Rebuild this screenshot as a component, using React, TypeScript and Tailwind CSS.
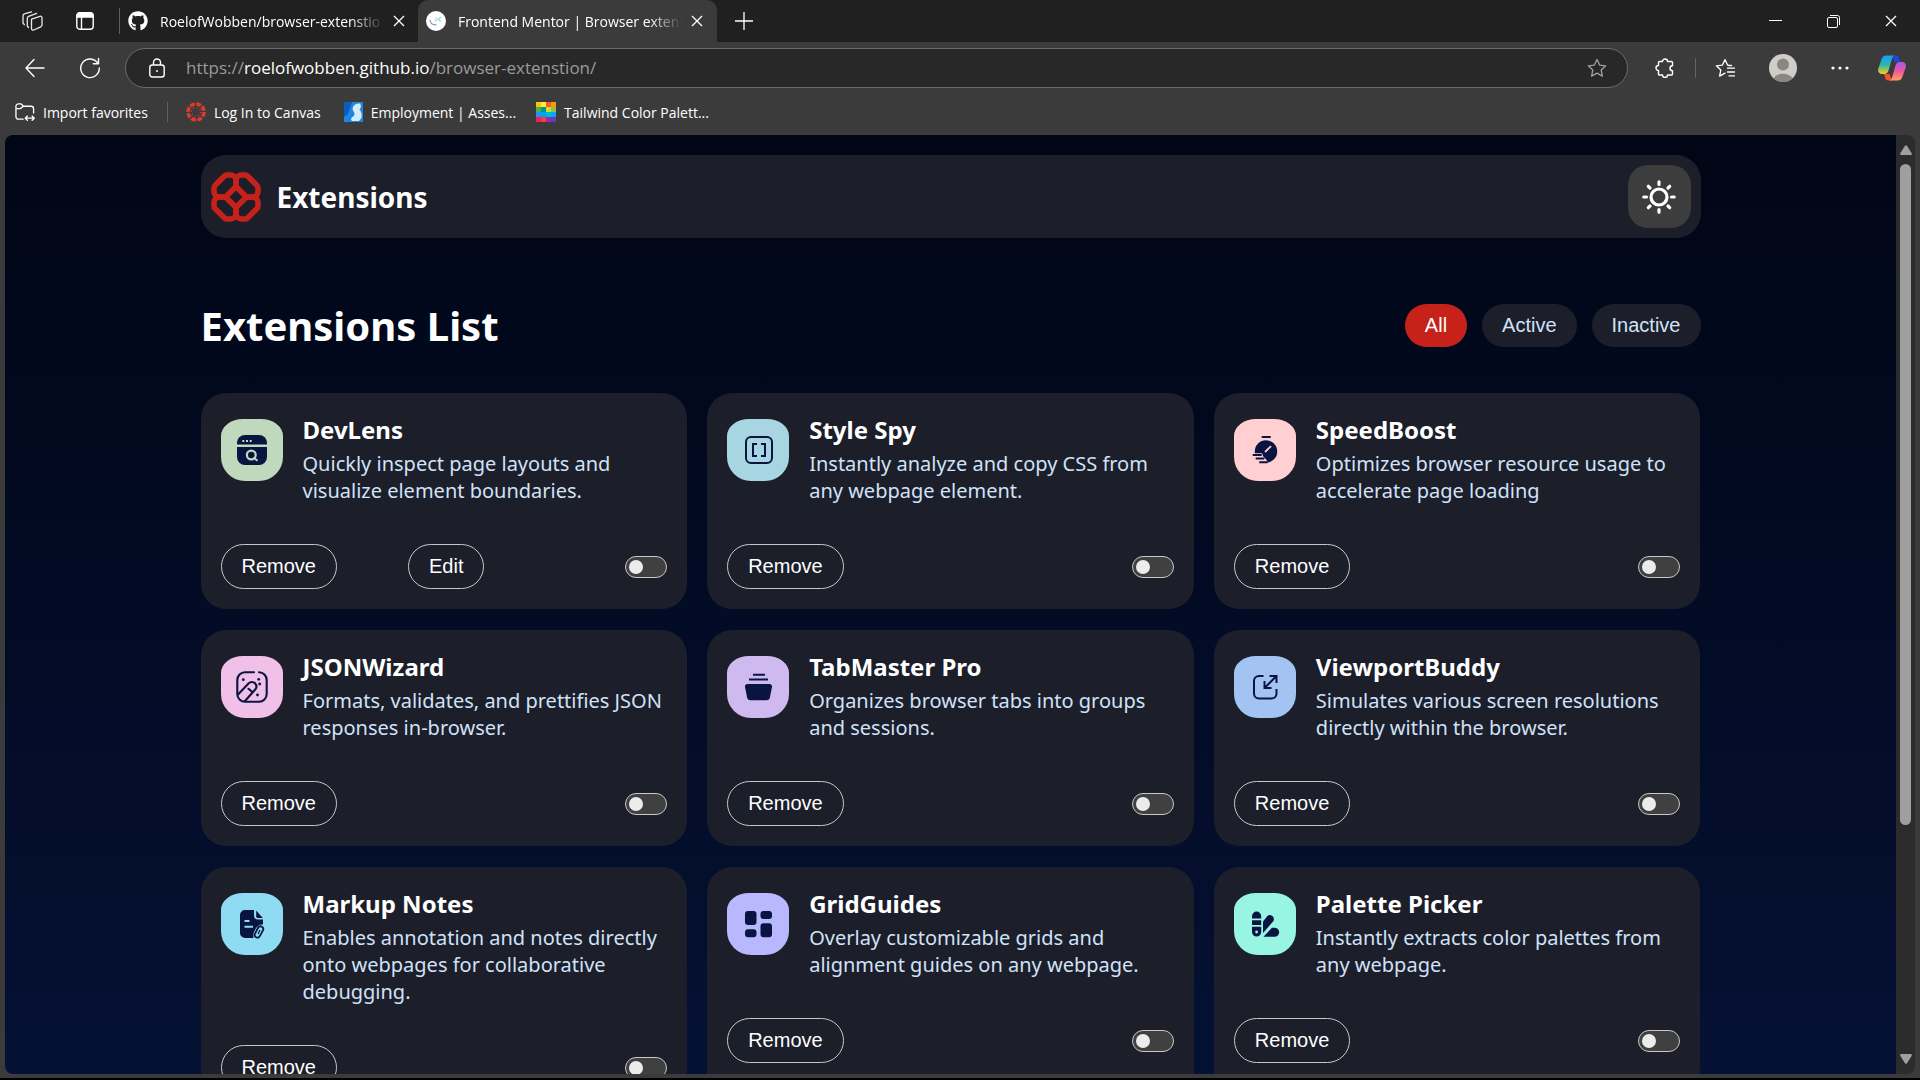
import { useState } from 'react';
import type { ReactNode } from 'react';
import { FaGithub } from 'react-icons/fa';

const NAVY = '#091540';

interface Extension {
  name: string;
  description: string;
  color: string;
  icon: ReactNode;
  editable?: boolean;
}

const extensions: Extension[] = [
  {
    name: 'DevLens',
    description: 'Quickly inspect page layouts and visualize element boundaries.',
    color: 'bg-[#c0d8bc]',
    editable: true,
    icon: (
      <>
        <path d="M16 25.500V24a8 8 0 0 1 8-8h14a8 8 0 0 1 8 8v1.500z" fill={NAVY} />
        <path d="M16 28h30v10a8 8 0 0 1-8 8H24a8 8 0 0 1-8-8z" fill={NAVY} />
        <path d="M21.300 22h2M25 22h2M28.700 22h2" stroke="#c0d8bc" strokeWidth="2" />
        <circle cx="30.300" cy="36" r="4.400" fill="none" stroke="#c0d8bc" strokeWidth="2.200" />
        <path d="m32.500 38.500 4 3.200" stroke="#c0d8bc" strokeWidth="2" />
      </>
    ),
  },
  {
    name: 'Style Spy',
    description: 'Instantly analyze and copy CSS from any webpage element.',
    color: 'bg-[#a8d5e2]',
    icon: (
      <g fill="none" stroke={NAVY} strokeWidth="2">
        <rect x="19" y="18" width="26" height="26" rx="5" />
        <path d="M30 25h-4v12h4M34 25h4v12h-4" />
      </g>
    ),
  },
  {
    name: 'SpeedBoost',
    description: 'Optimizes browser resource usage to accelerate page loading',
    color: 'bg-[#ffcfd2]',
    icon: (
      <>
        <circle cx="32" cy="32.4" r="11.2" fill={NAVY} />
        <path d="M20 34.2h8l1.5 3.5 3 3 2 4.3H20z" fill="#ffcfd2" />
        <path d="M28.5 18H36M19.5 35.9H27M22.500 39.5h7M26 43.2h7" stroke={NAVY} strokeWidth="2" strokeLinecap="round" />
        <path d="m31.5 32.500 5-4.8" stroke="#ffcfd2" strokeWidth="1.8" strokeLinecap="round" />
      </>
    ),
  },
  {
    name: 'JSONWizard',
    description: 'Formats, validates, and prettifies JSON responses in-browser.',
    color: 'bg-[#f1c0e8]',
    icon: (
      <>
        <g fill="none" stroke={NAVY} strokeWidth="2.1" strokeLinecap="round">
          <path d="M33 16.3h-9a7.7 7.7 0 0 0-7.7 7.7v14a7.7 7.7 0 0 0 7.7 7.7h14a7.7 7.7 0 0 0 7.7-7.7V24a7.7 7.7 0 0 0-7.7-7.7" />
          <path d="m17 38.5 10.5-11c2-2 5-1.8 6.5-.2 1.7 2 1.7 4.6.2 6.2L24 45M27.5 32.8l3.5 3" />
        </g>
        <g fill={NAVY}>
          <circle cx="22.3" cy="23.7" r="1.4" />
          <circle cx="37.7" cy="23.3" r="1.4" />
          <circle cx="38.7" cy="28" r="1.4" />
          <circle cx="36.5" cy="39" r="1.4" />
        </g>
      </>
    ),
  },
  {
    name: 'TabMaster Pro',
    description: 'Organizes browser tabs into groups and sessions.',
    color: 'bg-[#cfbaf0]',
    icon: (
      <>
        <path d="M26 18.8h12M22 23.5h19" stroke={NAVY} strokeWidth="2" />
        <path d="M20.5 28h22c1.8 0 2.8 1.2 2.5 3l-2 10c-.4 2.2-1.5 3.300-3.600 3.300H23.600c-2.100 0-3.200-1.100-3.600-3.300l-2-10c-.3-1.800.7-3 2.500-3z" fill={NAVY} />
      </>
    ),
  },
  {
    name: 'ViewportBuddy',
    description: 'Simulates various screen resolutions directly within the browser.',
    color: 'bg-[#a3c4f3]',
    icon: (
      <g fill="none" stroke={NAVY} strokeWidth="2">
        <path d="M29.5 20H25a5 5 0 0 0-5 5v12.5a5 5 0 0 0 5 5h12.5a5 5 0 0 0 5-5V33" />
        <path d="m30.5 32 12-12M35.500 20h7v7M30.500 25v7h7" />
      </g>
    ),
  },
  {
    name: 'Markup Notes',
    description: 'Enables annotation and notes directly onto webpages for collaborative debugging.',
    color: 'bg-[#90dbf4]',
    icon: (
      <>
        <path d="M24 17h9v5.5a4 4 0 0 0 4 4h5v5c-3.500-.4-6 1.500-7.500 4.500-1.600 3-2.800 5.500-2 9H24a5 5 0 0 1-5-5V22a5 5 0 0 1 5-5z" fill={NAVY} />
        <path d="M35.2 17.5 41.8 25H37a1.8 1.8 0 0 1-1.8-1.8z" fill={NAVY} />
        <path d="M23.5 28h5M23.5 33.7H32" stroke="#90dbf4" strokeWidth="2" />
        <rect x="35.2" y="33" width="5.5" height="12" rx="2.7" transform="rotate(28 38 39)" fill="none" stroke={NAVY} strokeWidth="1.8" />
        <path d="m37 41 2-4" stroke={NAVY} strokeWidth="1.2" />
      </>
    ),
  },
  {
    name: 'GridGuides',
    description: 'Overlay customizable grids and alignment guides on any webpage.',
    color: 'bg-[#b9b8ff]',
    icon: (
      <g fill={NAVY}>
        <rect x="18" y="18" width="11.5" height="14" rx="3" />
        <rect x="33.5" y="18" width="11.5" height="8" rx="3" />
        <rect x="18" y="36.2" width="11.5" height="8" rx="3" />
        <rect x="33.5" y="30.2" width="11.5" height="14" rx="3" />
      </g>
    ),
  },
  {
    name: 'Palette Picker',
    description: 'Instantly extracts color palettes from any webpage.',
    color: 'bg-[#98f5e1]',
    icon: (
      <>
        <path d="M18 25.5v-2.3a4.6 4.6 0 0 1 9.2 0v2.3zM18 27.3h9.2V32H18zM18 33.8h9.2V39a4.6 4.6 0 0 1-9.2 0z" fill={NAVY} />
        <circle cx="22.6" cy="39" r="1.4" fill="#98f5e1" />
        <path d="M29 40V28.500l4.200-5.200c3-3.200 8 .6 6.300 4.700z" fill={NAVY} />
        <path d="m29.500 43.700 8.500-9h3c5.500.4 5.500 8.600 0 9z" fill={NAVY} />
      </>
    ),
  },
];

// one of the four interlocking loops of the logo, the rest are rotations of it
const LOOP = 'M16 3h3.500A5.500 5.500 0 0 1 25 8.500V13a4 4 0 0 1-1.200 2.800l-8 8A4 4 0 0 1 13 25H8.500A5.500 5.500 0 0 1 3 19.500V16a4 4 0 0 1 1.200-2.800l9-9A4 4 0 0 1 16 3z';

function Logo() {
  return (
    <svg viewBox="0 0 50 50" className="size-[50px]" fill="none" stroke="#c7221a" strokeWidth="5.6">
      <path d={LOOP} />
      <path d={LOOP} transform="rotate(90 25 25)" />
      <path d={LOOP} transform="rotate(180 25 25)" />
      <path d={LOOP} transform="rotate(270 25 25)" />
    </svg>
  );
}

function SunIcon() {
  return (
    <svg viewBox="0 0 36 36" className="size-9" fill="none" stroke="#fff" strokeWidth="3.2" strokeLinecap="round">
      <circle cx="18" cy="18" r="8" />
      <path d="M18 2.8v2.700M18 30.500v2.700M2.800 18h2.700M30.500 18h2.700M7.300 7.300 9 9M27 27l1.700 1.700M28.700 7.300 27 9M9 27l-1.700 1.700" />
    </svg>
  );
}

function CloseIcon() {
  return (
    <svg viewBox="0 0 12 12" className="size-3" stroke="#fff" strokeWidth="1.300">
      <path d="m1 1 10 10M11 1 1 11" />
    </svg>
  );
}

interface TabProps {
  title: string;
  icon: ReactNode;
  active?: boolean;
}

function Tab({ title, icon, active }: TabProps) {
  return (
    <div
      className={
        active
          ? 'flex h-full w-[299px] items-center rounded-t-[10px] bg-[#3b3b3b] pl-2'
          : 'flex h-full w-[298px] items-center pl-2'
      }
    >
      {icon}
      <span className="ml-3 w-[224px] overflow-hidden text-[14px] whitespace-nowrap [mask-image:linear-gradient(to_right,black_85%,transparent)]">
        {title}
      </span>
      <button aria-label="Close tab" className="ml-[9px]">
        <CloseIcon />
      </button>
    </div>
  );
}

function TitleBar() {
  return (
    <div className="flex h-[42px] shrink-0 items-center bg-[#202020] pl-[22px]">
      <button aria-label="Workspaces">
        <svg viewBox="0 0 21 20" className="h-5 w-[21px]" fill="none" stroke="#e8e8e8" strokeWidth="1.300" strokeLinejoin="round" strokeLinecap="round">
          <path d="M9.500 8.200 18 5.300a1.500 1.500 0 0 1 2 1.400v7.600l-1.200 1.500-7 3.200c-1.200.5-2.300-.1-2.300-1.400z" />
          <path d="M6.500 16.500 5.300 15V7.500c0-1 .4-1.700 1.300-2.100l8-3" />
          <path d="M2.300 13.700 1 12V5c0-1 .4-1.700 1.300-2.100L9.500.8" />
        </svg>
      </button>
      <button aria-label="Tab actions" className="ml-[33px]">
        <svg viewBox="0 0 18 18" className="size-[18px]" fill="none" stroke="#fff" strokeWidth="1.400">
          <rect x=".8" y=".8" width="16.400" height="16.400" rx="3" />
          <path d="M1 3.500A2.500 2.500 0 0 1 3.500 1h11A2.500 2.500 0 0 1 17 3.500V5H1z" fill="#fff" />
          <path d="M5.500 5v12" />
        </svg>
      </button>
      <div className="ml-[25px] h-[26px] w-px bg-[#5f5f5f]" />
      <Tab title="RoelofWobben/browser-extenstio" icon={<FaGithub className="size-5 shrink-0" />} />
      <Tab
        active
        title="Frontend Mentor | Browser extens"
        icon={
          <svg viewBox="0 0 20 20" className="size-5 shrink-0">
            <circle cx="10" cy="10" r="10" fill="#fff" />
            <path d="M4 9c.5 3.500 3 5.200 6.500 4.800" fill="none" stroke="#7d8fd0" strokeWidth="1.200" />
            <path d="M10 6.500v4M15 6l-3 2.500 3 2" fill="none" stroke="#8fd6d8" strokeWidth="1.100" />
          </svg>
        }
      />
      <button aria-label="New tab" className="ml-[18px]">
        <svg viewBox="0 0 18 18" className="size-[18px]" stroke="#fff" strokeWidth="1.300">
          <path d="M9 0v18M0 9h18" />
        </svg>
      </button>
      <div className="ml-auto flex items-center gap-[45px] pr-[23px]">
        <button aria-label="Minimize">
          <svg viewBox="0 0 13 13" className="size-[13px]" stroke="#fff">
            <path d="M0 5.500h13" />
          </svg>
        </button>
        <button aria-label="Restore">
          <svg viewBox="0 0 13 13" className="size-[13px]" fill="none" stroke="#fff">
            <rect x=".5" y="2.500" width="10" height="10" rx="1.500" />
            <path d="M3 .5h7.500a2 2 0 0 1 2 2V10" />
          </svg>
        </button>
        <button aria-label="Close">
          <CloseIcon />
        </button>
      </div>
    </div>
  );
}

const STAR = 'm10 1.500 2.600 5.600 6.100.7-4.500 4.200 1.200 6.100-5.400-3-5.400 3 1.200-6.100L1.300 7.800l6.100-.7z';

function Toolbar() {
  return (
    <div className="flex h-[52px] shrink-0 items-center pr-3.5 pl-[25px]">
      <button aria-label="Back">
        <svg viewBox="0 0 20 20" className="size-5" fill="none" stroke="#fff" strokeWidth="1.400" strokeLinecap="round" strokeLinejoin="round">
          <path d="M19 10H1M9 1.500 1 10l8 8.500" />
        </svg>
      </button>
      <button aria-label="Refresh" className="ml-[34px]">
        <svg viewBox="0 0 22 22" className="size-[22px]" fill="none" stroke="#fff" strokeWidth="1.400" strokeLinecap="round" strokeLinejoin="round">
          <path d="M19 6.500A9.300 9.300 0 1 0 20.300 11M19.500 1.500v5.200h-5.200" />
        </svg>
      </button>
      <div className="ml-6 flex h-10 flex-1 items-center rounded-full border border-[#6b6b6b] bg-[#282828] pr-5 pl-[23px]">
        <svg viewBox="0 0 16 20" className="h-5 w-4" fill="none" stroke="#fff" strokeWidth="1.400">
          <rect x=".8" y="7" width="14.400" height="12" rx="2.500" />
          <path d="M4.500 7V4.500a3.500 3.500 0 0 1 7 0V7" />
          <circle cx="8" cy="13" r="1" fill="#fff" stroke="none" />
        </svg>
        <span className="ml-[21px] flex-1 text-[17px] text-[#9a9a9a]">
          https://<span className="text-white">roelofwobben.github.io</span>/browser-extenstion/
        </span>
        <button aria-label="Add to favorites">
          <svg viewBox="0 0 20 20" className="size-5" fill="none" stroke="#a0a0a0" strokeWidth="1.300" strokeLinejoin="round">
            <path d={STAR} />
          </svg>
        </button>
      </div>
      <button aria-label="Extensions" className="ml-[27px]">
        <svg viewBox="0 0 20 20" className="size-5" fill="none" stroke="#fff" strokeWidth="1.400" strokeLinejoin="round">
          <path d="M3.500 4.500a1 1 0 0 1 1-1h3a2.500 2.500 0 0 1 5 0h4a1 1 0 0 1 1 1v3.200a2.500 2.500 0 0 0 0 5v3.300a1 1 0 0 1-1 1h-4a2.500 2.500 0 0 1-5 0h-3a1 1 0 0 1-1-1v-3.500a2.500 2.500 0 0 1 0-5z" />
        </svg>
      </button>
      <div className="ml-5 h-5 w-px bg-[#636363]" />
      <button aria-label="Favorites" className="ml-[19px]">
        <svg viewBox="0 0 20 20" className="size-5" fill="none" stroke="#fff" strokeWidth="1.300" strokeLinejoin="round" strokeLinecap="round">
          <path d="m13.500 7.200-1-.1L10 1.500 7.400 7.100l-6.100.7 4.500 4.200-1.200 6.100 5.400-3M12.500 10.200h7M12.500 14h7M14 17.800h5.500M16.500 7.500h-3" />
        </svg>
      </button>
      <button aria-label="Profile" className="ml-[34px]">
        <svg viewBox="0 0 28 28" className="size-7">
          <circle cx="14" cy="14" r="14" fill="#d0cdc9" />
          <circle cx="14" cy="10.500" r="6" fill="#8a8683" />
          <path d="M4.500 24.300a10.500 8 0 0 1 19 0A14 14 0 0 1 4.500 24.300z" fill="#8a8683" />
        </svg>
      </button>
      <button aria-label="Settings and more" className="ml-[34px]">
        <svg viewBox="0 0 18 4" className="h-1 w-[18px]" fill="#fff">
          <circle cx="2" cy="2" r="1.600" />
          <circle cx="9" cy="2" r="1.600" />
          <circle cx="16" cy="2" r="1.600" />
        </svg>
      </button>
      <button aria-label="Copilot" className="ml-[29px]">
        <svg viewBox="0 0 28 28" className="size-7">
          <defs>
            <linearGradient id="copilotLeft" x1="0" y1="0" x2="0" y2="1">
              <stop offset="0" stopColor="#1b9cf5" />
              <stop offset=".5" stopColor="#2fb2b0" />
              <stop offset="1" stopColor="#f4d21c" />
            </linearGradient>
            <linearGradient id="copilotRight" x1="0" y1="0" x2="0" y2="1">
              <stop offset="0" stopColor="#a557f0" />
              <stop offset=".5" stopColor="#f0579b" />
              <stop offset="1" stopColor="#fda35b" />
            </linearGradient>
          </defs>
          <path d="M14 1.500h3.500c2 0 3 1.200 3.500 3l1 3.500h-5.500z" fill="#1f48d8" />
          <path d="M14 26.500h-3.500c-2 0-3-1.200-3.500-3L6 20h5.500z" fill="#f4512f" />
          <path d="M8.500 1.500H17c-1.500 0-2.500 1-3 3l-3.500 12c-.7 2.300-2 3.500-4 3.500H4c-3 0-4.500-2.500-3.700-5.500L3.500 5.500c.8-2.600 2.200-4 5-4z" fill="url(#copilotLeft)" />
          <path d="M19.500 26.500H11c1.500 0 2.500-1 3-3l3.500-12C18.200 9.200 19.500 8 21.500 8H24c3 0 4.500 2.500 3.700 5.500l-3.200 9c-.8 2.600-2.200 4-5 4z" fill="url(#copilotRight)" />
        </svg>
      </button>
    </div>
  );
}

// colours of the little 4x4 swatch favicon, row by row
const swatches = [
  '#ffc107', '#ffeb3b', '#ff5722', '#ff9800',
  '#4caf50', '#009688', '#cddc39', '#8bc34a',
  '#2196f3', '#00a2f3', '#00bcd4', '#03a9f4',
  '#e91e63', '#f44336', '#9c27b0', '#673ab7',
];

function FavoritesBar() {
  return (
    <div className="flex h-[41px] shrink-0 items-center pb-[5px] pl-[15px] text-[14px]">
      <button className="flex items-center gap-2">
        <svg viewBox="0 0 21 20" className="size-5" fill="none" stroke="#fff" strokeWidth="1.400" strokeLinecap="round" strokeLinejoin="round">
          <path d="M8.500 17.500H3.500a2.500 2.500 0 0 1-2.500-2.500V4a2.500 2.500 0 0 1 2.500-2.500h3l2.500 2.500h8A2.500 2.500 0 0 1 19.500 6.500V11M1 6.500h4.500L9 4" />
          <path d="M11 16.500h9M13 14.300l-2.200 2.200 2.200 2.200M18 14.300l2.200 2.200-2.200 2.200" />
        </svg>
        Import favorites
      </button>
      <div className="ml-[19px] h-5 w-px bg-[#5f5f5f]" />
      <a href="#canvas" className="ml-[18px] flex items-center gap-2">
        <svg viewBox="0 0 20 20" className="size-5" fill="none" stroke="#e2392f">
          <circle cx="10" cy="10" r="8" strokeWidth="3.500" strokeDasharray="4.800 1.480" />
          <circle cx="10" cy="10" r="4.500" strokeWidth="1.200" strokeDasharray="1.200 2.330" />
        </svg>
        Log In to Canvas
      </a>
      <a href="#employment" className="ml-[23px] flex items-center gap-2">
        <svg viewBox="0 0 19 20" className="h-5 w-[19px]">
          <rect width="19" height="20" fill="#1f86e0" />
          <path d="M0 0h8L4 12l-4 3z" fill="#0d5cc0" />
          <path d="M9 5c1-2.500 4-4 7-3.500 1.500 2 1 4.500-.5 6 2 2 2.500 5 2 8.500L15 19H8c-1.500-1.500-1-3 .5-4 2-1 2.500-3 1.500-5-1.300-1.300-1.700-3-1-5z" fill="#d6ecfb" />
        </svg>
        Employment | Asses...
      </a>
      <a href="#palette" className="ml-5 flex items-center gap-2">
        <svg viewBox="0 0 4 4" className="size-5" shapeRendering="crispEdges">
          {swatches.map((fill, i) => (
            <rect key={i} x={i % 4} y={Math.floor(i / 4)} width="1" height="1" fill={fill} />
          ))}
        </svg>
        Tailwind Color Palett...
      </a>
    </div>
  );
}

function ExtensionCard({ name, description, color, icon, editable }: Extension) {
  return (
    <article className="rounded-[25px] bg-[#1c1e2a] p-5">
      <div className="flex items-start gap-5">
        <div className={`${color} mt-1.5 size-[62px] shrink-0 rounded-[22px_22px_24px_24px/17px_17px_24px_24px]`}>
          <svg viewBox="0 0 62 62" className="size-full">
            {icon}
          </svg>
        </div>
        <div>
          <h2 className="mb-1 text-[24px] leading-[33px] font-bold text-white">{name}</h2>
          <p className="text-[20px] leading-[27px] text-[#d0e2f8]">{description}</p>
        </div>
      </div>
      <div className="mt-10 flex items-center font-['Liberation_Sans',sans-serif] text-[20px] leading-[23px] text-white">
        <button className="rounded-full border border-[#c8c8c8] px-5 py-2.5">Remove</button>
        {editable && <button className="ml-[71px] rounded-full border border-[#c8c8c8] px-5 py-2.5">Edit</button>}
        <input
          type="checkbox"
          aria-label={`Enable ${name}`}
          className="ml-auto flex h-[22px] w-[42px] appearance-none items-center rounded-full border border-[#c8c8c8] bg-[#404040] px-[3px] before:size-3.5 before:rounded-full before:bg-[#ececec] checked:justify-end checked:bg-[#c7221a]"
        />
      </div>
    </article>
  );
}

const filters = ['All', 'Active', 'Inactive'];

export default function App() {
  const [filter, setFilter] = useState('All');

  return (
    <div className="flex h-screen flex-col overflow-hidden border-b-2 border-black bg-[#3b3b3b] font-['Open_Sans',sans-serif] text-white">
      <TitleBar />
      <Toolbar />
      <FavoritesBar />
      <div className="mx-[5px] mb-1 flex min-h-0 flex-1 overflow-hidden rounded-lg">
        <main className="flex-1 overflow-hidden bg-linear-to-b from-[#010616] to-[#051134] px-5 pt-5 font-['Noto_Sans',sans-serif]">
          <div className="mx-auto max-w-[1500px]">
            <header className="flex items-center justify-between rounded-[25px] bg-[#1c1e2a] p-2.5">
              <div className="flex items-center gap-4">
                <Logo />
                <span className="text-[28px] leading-[50px] font-bold">Extensions</span>
              </div>
              <button aria-label="Toggle theme" className="flex size-[63px] items-center justify-center rounded-[20px] bg-[#3d3d3d]">
                <SunIcon />
              </button>
            </header>
            <div className="mt-[60px] mb-10 flex items-center justify-between">
              <h1 className="text-[40px] leading-[55px] font-bold">Extensions List</h1>
              <div className="flex gap-[15px] font-['Liberation_Sans',sans-serif] text-[20px] leading-[23px]">
                {filters.map((label) => (
                  <button
                    key={label}
                    onClick={() => setFilter(label)}
                    className={
                      label === filter
                        ? 'rounded-full bg-[#c7221a] px-5 py-2.5 text-white'
                        : 'rounded-full bg-[#1c1e2a] px-5 py-2.5 text-[#d0e2f8]'
                    }
                  >
                    {label}
                  </button>
                ))}
              </div>
            </div>
            <div className="grid grid-cols-3 gap-x-5 gap-y-[21px]">
              {extensions.map((extension) => (
                <ExtensionCard key={extension.name} {...extension} />
              ))}
            </div>
          </div>
        </main>
        <div className="flex w-[19px] flex-col items-center bg-[#2c2c2c] py-2.5">
          <svg viewBox="0 0 12 10" className="h-2.5 w-3 shrink-0" fill="#9f9f9f">
            <path d="M5 .8a1.300 1.300 0 0 1 2 0l4.700 7.500c.4.800 0 1.700-1 1.700H1.300c-1 0-1.400-.9-1-1.700z" />
          </svg>
          <div className="w-full flex-1 px-1 py-[9px]">
            <div className="h-3/4 rounded-full bg-[#9f9f9f]" />
          </div>
          <svg viewBox="0 0 12 10" className="h-2.5 w-3 shrink-0" fill="#9f9f9f">
            <path d="M5 9.200a1.300 1.300 0 0 0 2 0l4.700-7.500c.4-.8 0-1.700-1-1.700H1.300c-1 0-1.400.9-1 1.700z" />
          </svg>
        </div>
      </div>
    </div>
  );
}
